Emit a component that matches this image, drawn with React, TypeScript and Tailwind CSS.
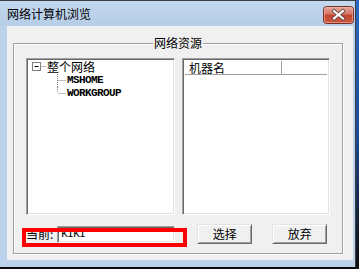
import React from 'react';

const cjk = "font-['Noto_Sans_CJK_SC',sans-serif]";
const mono = "font-['Liberation_Mono',monospace]";

function CloseButton() {
  return (
    <svg className="mt-[5px]" width="31" height="18" viewBox="0 0 31 18">
      <defs>
        <linearGradient id="closeGrad" x1="0" y1="0" x2="0" y2="1">
          <stop offset="0" stopColor="#e8aa9f" />
          <stop offset="0.45" stopColor="#d27463" />
          <stop offset="0.5" stopColor="#c24631" />
          <stop offset="1" stopColor="#c95a3f" />
        </linearGradient>
      </defs>
      <rect x="0.5" y="0.5" width="30" height="17" rx="3" fill="url(#closeGrad)" stroke="#7a2e25" />
      <rect x="1.5" y="1.5" width="28" height="15" rx="2" fill="none" stroke="#eeb9ae" strokeOpacity="0.6" />
      <path d="M11 5 L20 12.5 M20 5 L11 12.5" stroke="#5e4643" strokeWidth="3.6" strokeLinecap="square" />
      <path d="M11 5 L20 12.5 M20 5 L11 12.5" stroke="#ffffff" strokeWidth="2" strokeLinecap="square" />
    </svg>
  );
}

function TreeRoot() {
  return (
    <div className="flex h-[14px] items-center pl-[5px]">
      <svg width="15" height="14" viewBox="0 0 15 14">
        <rect x="0.5" y="2.5" width="8" height="8" fill="#fff" stroke="#808080" />
        <path d="M2.5 6.5 H6.5" stroke="#000" />
        <path d="M9.5 6.5 H14" stroke="#808080" strokeDasharray="1 1" />
      </svg>
      <span className={`${cjk} text-[12px] leading-none text-black`}>整个网络</span>
    </div>
  );
}

function TreeChild({ label, last }: { label: string; last?: boolean }) {
  return (
    <div className="flex h-[13px] items-center pl-[28px]">
      <svg width="12" height="13" viewBox="0 0 12 13">
        <path d={last ? 'M2.5 0 V6' : 'M2.5 0 V13'} stroke="#808080" strokeDasharray="1 1" />
        <path d="M3.5 6.5 H11" stroke="#808080" strokeDasharray="1 1" />
      </svg>
      <span className={`${mono} text-[11px] font-bold leading-none tracking-[-0.6px] text-black`}>{label}</span>
    </div>
  );
}

function Button({ label }: { label: string }) {
  return (
    <div className={`flex h-[20px] w-[55px] items-center justify-center border border-t-[#e3e3e3] border-l-[#e3e3e3] border-r-[#696969] border-b-[#696969] bg-[#f0f0f0] shadow-[inset_1px_1px_0_#fff,inset_-1px_-1px_0_#a0a0a0] ${cjk} text-[12px] leading-none text-black`}>
      {label}
    </div>
  );
}

const sunken =
  'border border-t-[#a0a0a0] border-l-[#a0a0a0] border-r-white border-b-white shadow-[inset_1px_1px_0_#696969,inset_-1px_-1px_0_#e3e3e3] bg-white';

export default function App() {
  return (
    <div className="flex h-[269px] w-[359px] items-start bg-[#0b0b0b]">
      <div className="flex h-[267px] w-[356px] flex-col border-t border-r border-[#3a3f47] bg-[#bcd2ea]">
        {/* Title bar */}
        <div className="flex h-[25px] items-start justify-between bg-gradient-to-b from-[#c3d8ee] to-[#b6cde7] pl-[7px] pr-[1px]">
          <span className={`${cjk} mt-[7px] text-[12px] leading-none text-black`}>网络计算机浏览</span>
          <CloseButton />
        </div>

        {/* Body */}
        <div className="mb-[7px] ml-[7px] mr-[2px] flex-1 bg-[#f0f0f0] pt-[17px]">
          <div className="relative ml-[6px] mr-[10px] h-[211px] border border-[#a0a0a0] pl-[12px] pt-[14px] shadow-[1px_1px_0_#fff,inset_1px_1px_0_#fff]">
            <span className={`absolute left-1/2 top-[-7px] -translate-x-1/2 bg-[#f0f0f0] px-[1px] ${cjk} text-[12px] leading-none text-black`}>
              网络资源
            </span>

            <div className="flex gap-[7px]">
              {/* Tree */}
              <div className={`h-[157px] w-[149px] pt-[1px] ${sunken}`}>
                <TreeRoot />
                <TreeChild label="MSHOME" />
                <TreeChild label="WORKGROUP" last />
              </div>

              {/* List */}
              <div className={`h-[157px] w-[148px] p-[2px] ${sunken}`}>
                <div className="flex h-[14px] border-b border-[#a0a0a0] bg-white">
                  <div className={`flex w-[97px] items-center border-r border-[#a0a0a0] pl-[4px] ${cjk} text-[12px] leading-none text-black`}>
                    机器名
                  </div>
                  <div className="flex-1 border-l border-white" />
                </div>
              </div>
            </div>

            {/* Bottom row */}
            <div className="relative mt-[9px] flex h-[20px] items-center">
              <span className={`${cjk} text-[12px] leading-none text-black`}>当前:</span>
              <div className={`ml-[4px] flex h-[17px] w-[118px] items-center pl-[3px] ${sunken}`}>
                <span className={`${mono} text-[11px] leading-none tracking-[-0.6px] text-black`}>KIKI</span>
              </div>
              <div className="ml-[22px]">
                <Button label="选择" />
              </div>
              <div className="ml-[20px]">
                <Button label="放弃" />
              </div>
              <div className="absolute left-[-4px] top-[4px] h-[19px] w-[165px] border-[4px] border-[#ff0000]" />
            </div>
          </div>
        </div>
      </div>
      <div className="h-[269px] flex-1 bg-gradient-to-b from-[#2c68c0] via-[#1d4a94] to-[#0b0b0b]" />
    </div>
  );
}
